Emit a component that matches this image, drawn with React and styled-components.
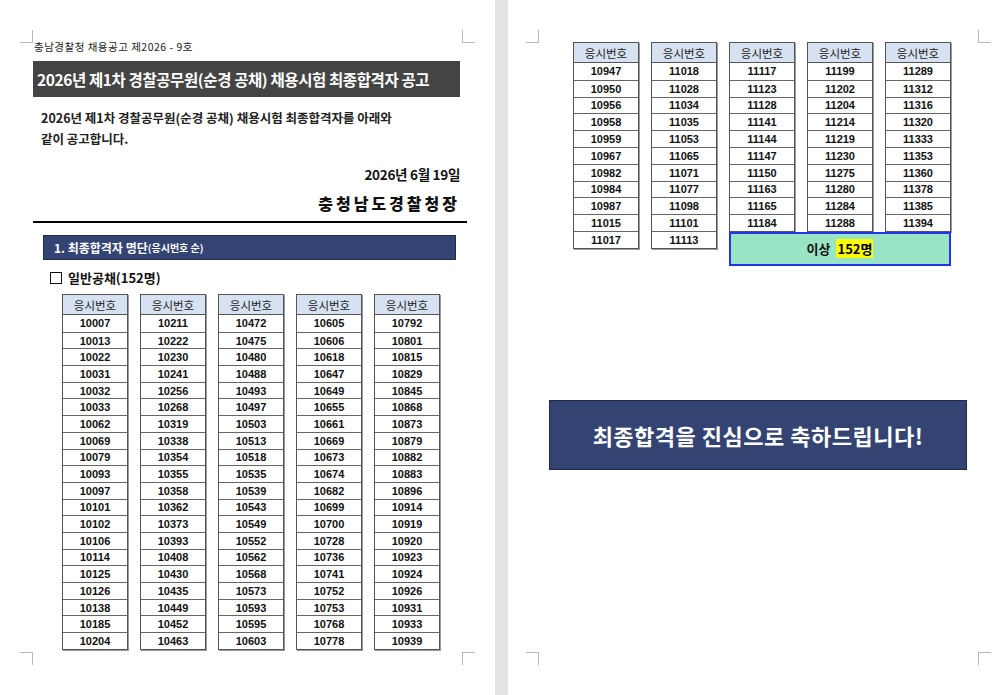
import React from "react";
import styled, { createGlobalStyle } from "styled-components";

const Global = createGlobalStyle`
  html, body { margin: 0; padding: 0; background: #e3e3e3; }
  body { font-family: "Noto Sans CJK KR", "Noto Sans", sans-serif; color: #111; }
`;

const Desk = styled.div`
  display: flex;
  gap: 13px;
  width: 1000px;
  height: 695px;
  overflow: hidden;
`;

const Page = styled.div`
  position: relative;
  background: #fff;
  width: ${(p) => p.$w}px;
  height: 695px;
  box-sizing: border-box;
  padding: ${(p) => p.$pad};
`;

const Corner = styled.div`
  position: absolute;
  width: 12px;
  height: 12px;
  border-color: #b8b8b8;
  border-style: solid;
  border-width: 0;
  ${(p) => p.$pos}
`;

const DocNo = styled.div`
  font-size: 10.5px;
  letter-spacing: 0.5px;
  color: #222;
  margin-left: 1px;
`;

const TitleBar = styled.div`
  margin-top: 7px;
  background: #444;
  color: #fff;
  font-weight: 700;
  font-size: 15.5px;
  height: 36px;
  display: flex;
  align-items: center;
  padding-left: 4px;
  white-space: nowrap;
  letter-spacing: -0.4px;
`;

const Body = styled.p`
  margin: 10px 0 0 8px;
  font-size: 12.5px;
  font-weight: 700;
  line-height: 21px;
  color: #222;
`;

const DateLine = styled.div`
  text-align: right;
  font-size: 13.5px;
  font-weight: 700;
  margin-top: 15px;
  letter-spacing: -0.3px;
`;

const Sign = styled.div`
  text-align: right;
  font-family: "Noto Sans CJK KR", serif;
  font-size: 16px;
  font-weight: 900;
  letter-spacing: 3px;
  margin-top: 7px;
`;

const Rule = styled.div`
  height: 2px;
  background: #000;
  margin: 6px -7px 0 0;
`;

const Section = styled.div`
  margin: 12px 4px 0 10px;
  height: 23px;
  background: #344472;
  border: 1px solid #222c4a;
  color: #fff;
  font-weight: 700;
  font-size: 12px;
  display: flex;
  align-items: center;
  padding-left: 10px;
  small { font-size: 10px; }
`;

const Sub = styled.div`
  margin: 8px 0 0 17px;
  font-size: 13px;
  font-weight: 700;
  display: flex;
  align-items: center;
  gap: 6px;
`;

const Box = styled.span`
  width: 10px;
  height: 10px;
  border: 1.5px solid #111;
`;

const Tables = styled.div`
  display: grid;
  grid-template-columns: repeat(5, 66px);
  column-gap: ${(p) => p.$gap}px;
  margin: ${(p) => p.$m};
`;

const Col = styled.div`
  border: 1px solid #555;
  align-self: start;
  grid-row: ${(p) => p.$row || "auto"};
  box-shadow: 1px 1px 0 #999;
`;

const Head = styled.div`
  height: 19px;
  background: #d6e1f1;
  border-bottom: 1px solid #555;
  display: flex;
  align-items: center;
  justify-content: center;
  font-size: 11.5px;
  color: #222;
`;

const Cell = styled.div`
  height: ${(p) => p.$h}px;
  box-sizing: border-box;
  border-top: 1px solid #666;
  display: flex;
  align-items: center;
  justify-content: center;
  font-size: 11px;
  font-weight: 700;
  font-family: "Liberation Sans", sans-serif;
  &:nth-child(2) { border-top: none; }
`;

const Total = styled.div`
  grid-column: 3 / 6;
  grid-row: 2;
  height: 34px;
  box-sizing: border-box;
  background: #99e4c4;
  border: 2px solid #2233ee;
  display: flex;
  align-items: center;
  justify-content: center;
  gap: 6px;
  font-size: 13px;
  font-weight: 700;
  mark { background: #ffff00; padding: 0 1px; }
`;

const Congrats = styled.div`
  margin: 163px 0 0 -24px;
  width: 418px;
  height: 70px;
  box-sizing: border-box;
  background: #344472;
  border: 1px solid #1f2a4a;
  color: #fff;
  font-weight: 700;
  font-size: 22px;
  display: flex;
  align-items: center;
  justify-content: center;
  letter-spacing: 0.5px;
`;

const left = [
  "10007 10013 10022 10031 10032 10033 10062 10069 10079 10093 10097 10101 10102 10106 10114 10125 10126 10138 10185 10204",
  "10211 10222 10230 10241 10256 10268 10319 10338 10354 10355 10358 10362 10373 10393 10408 10430 10435 10449 10452 10463",
  "10472 10475 10480 10488 10493 10497 10503 10513 10518 10535 10539 10543 10549 10552 10562 10568 10573 10593 10595 10603",
  "10605 10606 10618 10647 10649 10655 10661 10669 10673 10674 10682 10699 10700 10728 10736 10741 10752 10753 10768 10778",
  "10792 10801 10815 10829 10845 10868 10873 10879 10882 10883 10896 10914 10919 10920 10923 10924 10926 10931 10933 10939",
].map((s) => s.split(" "));

const right = [
  "10947 10950 10956 10958 10959 10967 10982 10984 10987 11015 11017",
  "11018 11028 11034 11035 11053 11065 11071 11077 11098 11101 11113",
  "11117 11123 11128 11141 11144 11147 11150 11163 11165 11184",
  "11199 11202 11204 11214 11219 11230 11275 11280 11284 11288",
  "11289 11312 11316 11320 11333 11353 11360 11378 11385 11394",
].map((s) => s.split(" "));

const corners = (l, r) => [
  `left:${l}px;top:30px;border-right-width:1px;border-bottom-width:1px;`,
  `left:${r}px;top:30px;border-left-width:1px;border-bottom-width:1px;`,
  `left:${l}px;top:652px;border-right-width:1px;border-top-width:1px;`,
  `left:${r}px;top:652px;border-left-width:1px;border-top-width:1px;`,
];

const Column = ({ nums, h, row }) => (
  <Col $row={row}>
    <Head>응시번호</Head>
    {nums.map((n) => (
      <Cell key={n} $h={h}>{n}</Cell>
    ))}
  </Col>
);

export default function App() {
  return (
    <>
      <Global />
      <Desk>
        <Page $w={495} $pad="39px 35px 0 33px">
          {corners(20, 462).map((c, i) => <Corner key={i} $pos={c} />)}
          <DocNo>충남경찰청 채용공고 제2026 - 9호</DocNo>
          <TitleBar>2026년 제1차 경찰공무원(순경 공채) 채용시험 최종합격자 공고</TitleBar>
          <Body>
            2026년 제1차 경찰공무원(순경 공채) 채용시험 최종합격자를 아래와
            <br />같이 공고합니다.
          </Body>
          <DateLine>2026년 6월 19일</DateLine>
          <Sign>충청남도경찰청장</Sign>
          <Rule />
          <Section>1. 최종합격자 명단<small>(응시번호 순)</small></Section>
          <Sub><Box />일반공채(152명)</Sub>
          <Tables $gap={12} $m="7px 0 0 29px">
            {left.map((c, i) => <Column key={i} nums={c} h={16.7} />)}
          </Tables>
        </Page>
        <Page $w={492} $pad="42px 0 0 65px">
          {corners(18, 470).map((c, i) => <Corner key={i} $pos={c} />)}
          <Tables $gap={12}>
            {right.map((c, i) => (
              <Column key={i} nums={c} h={16.8} row={i < 2 ? "1 / 3" : "1"} />
            ))}
            <Total>이상 <mark>152명</mark></Total>
          </Tables>
          <Congrats style={{ marginTop: 134 }}>최종합격을 진심으로 축하드립니다!</Congrats>
        </Page>
      </Desk>
    </>
  );
}
